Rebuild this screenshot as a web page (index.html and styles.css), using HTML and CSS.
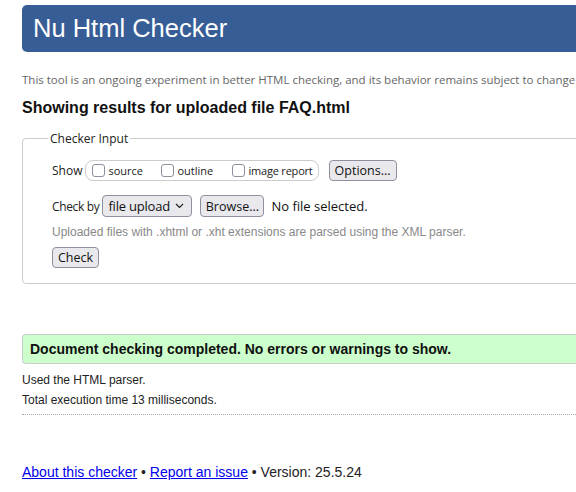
FILE: index.html
```html
<!DOCTYPE html>
<html>
<head>
<meta charset="utf-8">
<title>Nu Html Checker</title>
<link rel="stylesheet" href="styles.css">
</head>
<body>
<div class="page">
  <h1 class="banner">Nu Html Checker</h1>
  <p class="intro">This tool is an ongoing experiment in better HTML checking, and its behavior remains subject to change</p>
  <h2 class="results-title">Showing results for uploaded file FAQ.html</h2>
  <fieldset class="input-box">
    <legend class="legend">Checker Input</legend>
    <div class="row show-row">
      <span class="lbl">Show</span>
      <span class="pill">
        <label class="opt"><span class="cb"></span>source</label>
        <label class="opt"><span class="cb"></span>outline</label>
        <label class="opt"><span class="cb"></span>image report</label>
      </span>
      <span class="btn options">Options...</span>
    </div>
    <div class="row check-row">
      <span class="lbl">Check by</span>
      <span class="select">file upload<svg class="chev" width="9" height="6" viewBox="0 0 9 6"><path d="M1 1l3.5 3.5L8 1" fill="none" stroke="#222" stroke-width="1.2"/></svg></span>
      <span class="btn browse">Browse...</span>
      <span class="nofile">No file selected.</span>
    </div>
    <p class="hint">Uploaded files with .xhtml or .xht extensions are parsed using the XML parser.</p>
    <span class="btn check">Check</span>
  </fieldset>
  <p class="success">Document checking completed. No errors or warnings to show.</p>
  <p class="meta">Used the HTML parser.</p>
  <p class="meta">Total execution time 13 milliseconds.</p>
  <hr class="sep">
  <p class="footer"><a href="#">About this checker</a> • <a href="#">Report an issue</a> • Version: 25.5.24</p>
</div>
</body>
</html>
```
FILE: styles.css
```css
html, body { margin: 0; padding: 0; overflow: hidden; background: #fff; }
body { width: 576px; height: 492px; }
.page { width: 640px; padding: 5px 0 0 22px; font-family: "Liberation Sans", Arial, sans-serif; color: #222; }
.banner { margin: 0; height: 47px; background: #365d95; color: #fff; font-weight: normal; font-size: 25.5px; line-height: 47px; padding-left: 11px; border-radius: 5px; }
.intro { margin: 20px 0 0; font-family: "Open Sans", sans-serif; font-size: 11.5px; color: #666; line-height: 16px; }
.results-title { margin: 10px 0 0; font-size: 16px; font-weight: bold; color: #111; line-height: 20px; }
.input-box { margin: 12px 0 0; border: 1px solid #ccc; border-radius: 4px; padding: 5px 0 15px 29px; }
.legend { font-family: "Open Sans", sans-serif; font-size: 12px; color: #222; padding: 0 2px; margin-left: -4px; }
.row { display: flex; align-items: center; font-family: "Open Sans", sans-serif; font-size: 12px; white-space: nowrap; }
.show-row { margin-top: 8px; }
.lbl { margin-right: 3px; }
.check-row .lbl { margin-right: 3px; letter-spacing: -0.35px; }
.pill { display: inline-flex; align-items: center; border: 1px solid #ccc; border-radius: 8px; height: 19px; padding: 0 5px 0 6px; font-size: 11px; }
.opt { display: inline-flex; align-items: center; }
.opt:nth-child(1) { width: 69px; }
.opt:nth-child(2) { width: 71px; }
.opt:nth-child(3) { letter-spacing: -0.2px; }
.cb { width: 13px; height: 13px; border: 1px solid #8f8f9d; border-radius: 3px; margin-right: 3px; display: inline-block; box-sizing: border-box; background: #fff; }
.btn { display: inline-flex; align-items: center; justify-content: center; box-sizing: border-box; border: 1px solid #8f8f9d; border-radius: 4px; background: #e9e9ed; height: 21px; padding: 0 4px; font-family: "Open Sans", sans-serif; font-size: 12.5px; color: #111; white-space: nowrap; }
.options { margin-left: 10px; width: 68px; }
.check-row { margin-top: 14px; }
.select { display: inline-flex; align-items: center; box-sizing: border-box; height: 22px; border: 1px solid #8f8f9d; border-radius: 4px; background: #e9e9ed; padding: 0 7px 0 5px; font-size: 13px; font-family: "Open Sans", sans-serif; color: #111; width: 90px; justify-content: space-between; white-space: nowrap; letter-spacing: -0.2px; }
.chev { margin-left: 4px; flex: none; }
.browse { margin-left: 8px; height: 22px; width: 64px; }
.nofile { margin-left: 7px; font-size: 13px; font-family: "Open Sans", sans-serif; color: #111; }
.hint { margin: 8px 0 0; font-size: 12px; color: #888; line-height: 14px; }
.check { margin-top: 8px; height: 21px; width: 47px; }
.success { margin: 50px 0 0; height: 30px; box-sizing: border-box; background: #ccffcc; border: 1px solid #ccc; border-right: none; border-radius: 4px 0 0 4px; padding-left: 7px; font-weight: bold; font-size: 14px; line-height: 28px; color: #111; }
.meta { margin: 9px 0 0; font-size: 12px; line-height: 14px; color: #222; }
.meta + .meta { margin-top: 6px; }
.sep { margin: 7px 0 0; border: none; border-top: 1px dotted #aaa; height: 0; }
.footer { margin: 49px 0 0; font-size: 14px; color: #222; }
.footer a { color: #0000ee; }
```
